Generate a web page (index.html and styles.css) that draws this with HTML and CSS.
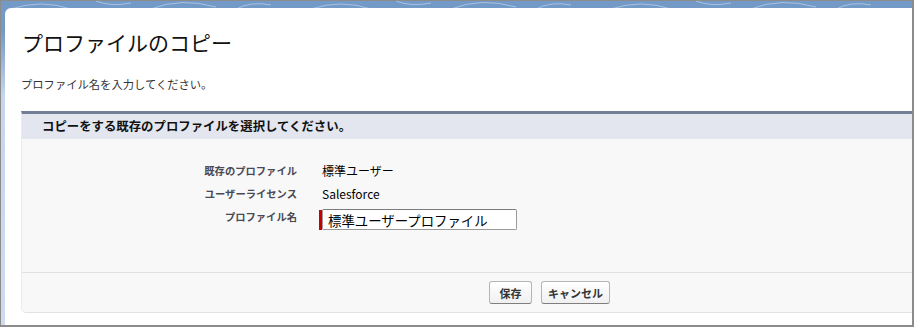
FILE: index.html
```html
<!DOCTYPE html>
<html lang="ja">
<head>
    <meta charset="UTF-8">
    <title>プロファイルのコピー</title>
    <link rel="stylesheet" href="styles.css">
</head>
<body>
    <div class="frame">
        <div class="panel">
            <h1 class="page-title">プロファイルのコピー</h1>
            <p class="page-desc">プロファイル名を入力してください。</p>

            <!-- Copy form block -->
            <div class="block">
                <div class="block-header">コピーをする既存のプロファイルを選択してください。</div>

                <div class="block-body">
                    <div class="field-grid">
                        <span class="field-label">既存のプロファイル</span>
                        <span class="field-value">標準ユーザー</span>

                        <span class="field-label">ユーザーライセンス</span>
                        <span class="field-value">Salesforce</span>

                        <label class="field-label" for="profile-name">プロファイル名</label>
                        <div class="required-input">
                            <span class="required-bar"></span>
                            <input type="text" id="profile-name" class="text-input" value="標準ユーザープロファイル">
                        </div>
                    </div>
                </div>

                <div class="block-buttons">
                    <button class="btn btn-save">保存</button>
                    <button class="btn">キャンセル</button>
                </div>
            </div>
        </div>
    </div>
</body>
</html>
```

FILE: styles.css
```css
* {
    margin: 0;
    padding: 0;
    box-sizing: border-box;
}

body {
    width: 914px;
    height: 327px;
    overflow: hidden;
    font-family: "Noto Sans CJK JP", "Noto Sans", sans-serif;
    color: #000;
    background: #fff;
}

.frame {
    height: 327px;
    padding: 7px 0 0 4px;
    border-style: solid;
    border-color: #8c8c8c;
    border-width: 1px 2px 2px 1px;
    background:
        url("data:image/svg+xml;utf8,<svg xmlns='http://www.w3.org/2000/svg' width='300' height='8'><g fill='none' stroke='%23a9c2e0' stroke-width='1'><path d='M10 8 Q40 -2 70 8'/><path d='M95 0 Q110 6 130 2'/><path d='M150 8 Q180 -4 215 6'/><path d='M235 8 Q250 0 270 4'/></g></svg>") repeat-x 0 0,
        linear-gradient(#7399c6 0, #7399c6 30px, #c6d6ec 95px, #cfdcee 100%);
}

.panel {
    height: 100%;
    background: #fff;
    border-top-left-radius: 6px;
    padding: 0 0 11px 16px;
}

.page-title {
    padding-top: 19px;
    padding-left: 1px;
    font-size: 21px;
    font-weight: 400;
    line-height: 30px;
    color: #111;
}

.page-desc {
    margin-top: 19px;
    font-size: 11.3px;
    line-height: 16px;
    color: #333;
}

.block {
    margin-top: 19px;
    border-top: 3px solid #727d96;
    border-bottom: 1px solid #e2e2e2;
    border-left: 1px solid #ececec;
    border-bottom-left-radius: 5px;
    background: #f8f8f8;
}

.block-header {
    height: 25px;
    line-height: 25px;
    padding-left: 20px;
    background: #e3e6ef;
    font-size: 12.4px;
    font-weight: 700;
    color: #111;
}

.block-body {
    height: 134px;
    padding-top: 24px;
    border-bottom: 1px solid #e0e0e0;
}

.field-grid {
    display: grid;
    grid-template-columns: 275px 1fr;
    column-gap: 25px;
    row-gap: 7px;
    line-height: 16px;
}

.field-label {
    text-align: right;
    font-size: 10.3px;
    font-weight: 700;
    color: #4a4a56;
}

.field-value {
    font-size: 12px;
    color: #000;
}

.required-input {
    display: flex;
    margin-left: -3px;
}

.required-bar {
    width: 3px;
    height: 20px;
    margin-top: 1px;
    background: #c00;
}

.text-input {
    width: 195px;
    height: 21px;
    padding: 0 5px;
    border: 1px solid #9a9a9a;
    border-top-color: #7b7b7b;
    border-radius: 2px;
    background: #fff;
    font-family: inherit;
    font-size: 13.4px;
    line-height: 19px;
    color: #000;
}

.block-buttons {
    display: flex;
    gap: 9px;
    padding: 8px 0 8px 467px;
}

.btn {
    height: 23px;
    min-width: 43px;
    padding: 0 6px;
    border: 1px solid #b5b5b5;
    border-bottom-color: #7f7f7f;
    border-radius: 3px;
    background: linear-gradient(#ffffff, #f0f0f0);
    font-family: inherit;
    font-size: 11px;
    font-weight: 700;
    color: #333;
    cursor: pointer;
}
```
